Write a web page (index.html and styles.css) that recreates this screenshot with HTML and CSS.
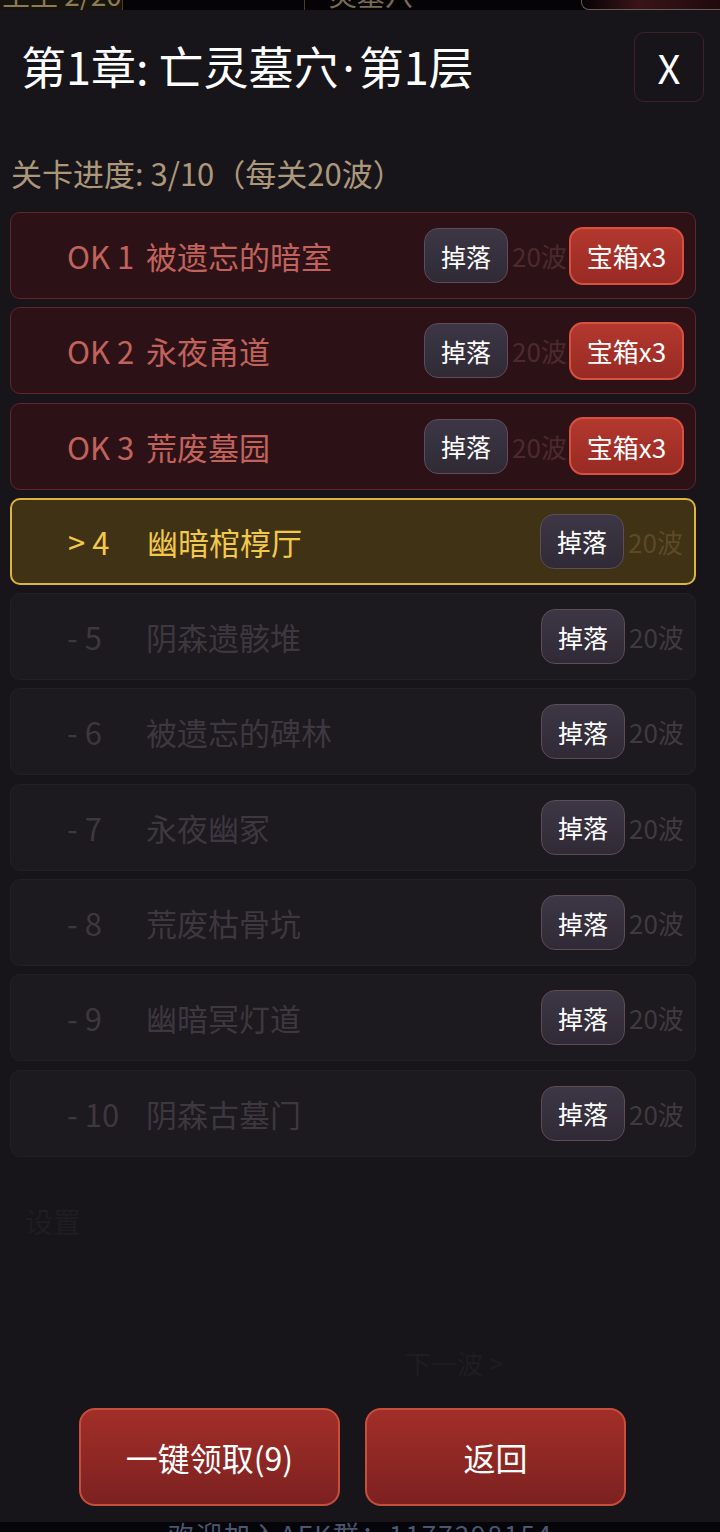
FILE: index.html
```html
<!DOCTYPE html>
<html lang="zh-CN">
<head>
    <meta charset="UTF-8">
    <meta name="viewport" content="width=device-width, initial-scale=1.0">
    <title>关卡选择</title>
    <link rel="stylesheet" href="styles.css">
</head>
<body>
    <div class="game-top">
        <div class="hud-box hud-left"><span class="hud-text">主生 2/20</span></div>
        <div class="hud-box hud-mid"><span class="hud-text">灵墓穴</span></div>
        <div class="hud-right"></div>
    </div>

    <div class="modal">
        <div class="modal-head">
            <h1 class="modal-title">第1章: 亡灵墓穴<span class="dot">·</span>第1层</h1>
            <button class="close-btn">X</button>
        </div>
        <div class="progress">关卡进度: 3/10（每关20波）</div>

        <ul class="stage-list">
            <li class="stage done">
                <span class="stage-no">OK 1</span><span class="stage-name">被遗忘的暗室</span>
                <button class="drop-btn">掉落</button><span class="waves">20波</span>
                <button class="chest-btn">宝箱x3</button>
            </li>
            <li class="stage done">
                <span class="stage-no">OK 2</span><span class="stage-name">永夜甬道</span>
                <button class="drop-btn">掉落</button><span class="waves">20波</span>
                <button class="chest-btn">宝箱x3</button>
            </li>
            <li class="stage done">
                <span class="stage-no">OK 3</span><span class="stage-name">荒废墓园</span>
                <button class="drop-btn">掉落</button><span class="waves">20波</span>
                <button class="chest-btn">宝箱x3</button>
            </li>
            <li class="stage current">
                <span class="stage-no">&gt; 4</span><span class="stage-name">幽暗棺椁厅</span>
                <button class="drop-btn">掉落</button><span class="waves">20波</span>
            </li>
            <li class="stage locked">
                <span class="stage-no">- 5</span><span class="stage-name">阴森遗骸堆</span>
                <button class="drop-btn">掉落</button><span class="waves">20波</span>
            </li>
            <li class="stage locked">
                <span class="stage-no">- 6</span><span class="stage-name">被遗忘的碑林</span>
                <button class="drop-btn">掉落</button><span class="waves">20波</span>
            </li>
            <li class="stage locked">
                <span class="stage-no">- 7</span><span class="stage-name">永夜幽冢</span>
                <button class="drop-btn">掉落</button><span class="waves">20波</span>
            </li>
            <li class="stage locked">
                <span class="stage-no">- 8</span><span class="stage-name">荒废枯骨坑</span>
                <button class="drop-btn">掉落</button><span class="waves">20波</span>
            </li>
            <li class="stage locked">
                <span class="stage-no">- 9</span><span class="stage-name">幽暗冥灯道</span>
                <button class="drop-btn">掉落</button><span class="waves">20波</span>
            </li>
            <li class="stage locked">
                <span class="stage-no">- 10</span><span class="stage-name">阴森古墓门</span>
                <button class="drop-btn">掉落</button><span class="waves">20波</span>
            </li>
        </ul>

        <!-- faint game text showing through the overlay -->
        <div class="ghost ghost-settings">设置</div>
        <div class="ghost ghost-next">下一波 &gt;</div>

        <div class="modal-foot">
            <button class="big-btn">一键领取(9)</button>
            <button class="big-btn">返回</button>
        </div>
    </div>

    <div class="game-bottom">
        <span class="notice">欢迎加入AFK群：1177298154</span>
    </div>
</body>
</html>
```

FILE: styles.css
```css
* {
    box-sizing: border-box;
}
body {
    margin: 0;
    width: 720px;
    height: 1532px;
    overflow: hidden;
    background: #060408;
    font-family: "Noto Sans CJK SC", "Noto Sans", sans-serif;
}
button {
    font-family: inherit;
    cursor: pointer;
}

/* game screen peeking out above and below */
.game-top {
    height: 10px;
    overflow: hidden;
    display: flex;
    background: #050306;
}
.hud-box {
    height: 10px;
    overflow: hidden;
}
.hud-text {
    display: block;
    font-size: 28px;
    line-height: 28px;
    margin-top: -20px;
    white-space: nowrap;
}
.hud-left {
    width: 124px;
    background: #17140f;
    border-right: 1px solid #4a3e26;
    color: #8c7c52;
    padding-left: 2px;
}
.hud-mid {
    margin-left: 181px;
    width: 280px;
    border-left: 1px solid #4a3e26;
    color: #7a6c52;
    padding-left: 24px;
}
.hud-right {
    margin-left: auto;
    width: 140px;
    height: 10px;
    background: linear-gradient(90deg, #050306, #3a1416 40%, #200a0c);
    border-bottom: 1px solid #6a5a5c;
    border-left: 1px solid #6a5a5c;
    border-bottom-left-radius: 8px;
}
.game-bottom {
    height: 10px;
    overflow: hidden;
    background: #06050a;
    padding-left: 168px;
}
.notice {
    display: block;
    color: #4c5672;
    font-size: 26px;
    line-height: 24px;
    letter-spacing: 2px;
    white-space: nowrap;
}

/* modal */
.modal {
    height: 1512px;
    background: #17151a;
    padding: 22px 24px 0 10px;
    display: flex;
    flex-direction: column;
}
.modal-head {
    display: flex;
    align-items: center;
    height: 70px;
}
.modal-title {
    margin: 0 0 0 11px;
    flex: 1;
    color: #ffffff;
    font-size: 45px;
    font-weight: 400;
    line-height: 52px;
    white-space: nowrap;
}
.modal-title .dot {
    font-family: "Noto Sans", sans-serif;
    margin: 0 4px;
}
.close-btn {
    width: 70px;
    height: 70px;
    margin-right: -8px;
    background: transparent;
    border: 1.5px solid #3e2226;
    border-radius: 10px;
    color: #ffffff;
    font-size: 40px;
    font-weight: 400;
    padding: 0;
}
.progress {
    margin-top: 52px;
    padding-left: 1px;
    color: #ad977a;
    font-size: 31px;
    line-height: 38px;
}

/* stage rows */
.stage-list {
    list-style: none;
    margin: 20px 0 0;
    padding: 0;
    display: flex;
    flex-direction: column;
    gap: 8.3px;
}
.stage {
    height: 87px;
    display: flex;
    align-items: center;
    padding: 0 9px 0 56px;
    border-radius: 10px;
    border: 1.5px solid #231f26;
    background: #1c191f;
}
.stage-no {
    width: 79px;
    flex-shrink: 0;
    font-size: 31px;
    white-space: nowrap;
}
.stage-name {
    flex: 1;
    font-size: 31px;
    white-space: nowrap;
}
.drop-btn {
    width: 84px;
    height: 55px;
    padding: 0;
    border-radius: 14px;
    border: 1.5px solid #5e4c56;
    background: linear-gradient(#3d3745, #2f2a36);
    color: #ffffff;
    font-size: 25px;
}
.waves {
    width: 57px;
    margin-left: 4px;
    font-size: 26px;
    white-space: nowrap;
    overflow: hidden;
}
.chest-btn {
    width: 115px;
    height: 58px;
    padding: 0;
    border-radius: 14px;
    border: 2px solid #d9503e;
    background: linear-gradient(#b3382e, #982a24);
    color: #ffffff;
    font-size: 26px;
}

.stage.done {
    background: #2c1216;
    border-color: #60262a;
    padding-right: 11px;
}
.stage.done .stage-no,
.stage.done .stage-name {
    color: #c2625c;
}
.stage.done .waves {
    color: #4c2a2c;
}

.stage.current {
    background: #403214;
    border: 2px solid #dcb53c;
}
.stage.current .stage-no,
.stage.current .stage-name {
    color: #f3c94c;
}
.stage.current .waves {
    color: #5c4a26;
}

.stage.locked .stage-no,
.stage.locked .stage-name {
    color: #3d3740;
}
.stage.locked .waves {
    color: #3f3941;
}

/* ghost text from the screen underneath */
.ghost {
    color: #1f1c22;
    white-space: nowrap;
}
.ghost-settings {
    margin-top: 46px;
    padding-left: 15px;
    font-size: 28px;
    line-height: 36px;
}
.ghost-next {
    margin-top: 109px;
    padding-left: 395px;
    font-size: 26px;
    line-height: 30px;
}

/* footer buttons */
.modal-foot {
    margin-top: 30px;
    display: flex;
    gap: 25px;
    padding-left: 69px;
}
.big-btn {
    width: 261px;
    height: 98px;
    padding: 0;
    border-radius: 16px;
    border: 2px solid #c84e3c;
    background: linear-gradient(#a22e28, #7c2120);
    color: #ffffff;
    font-size: 32px;
}
```
